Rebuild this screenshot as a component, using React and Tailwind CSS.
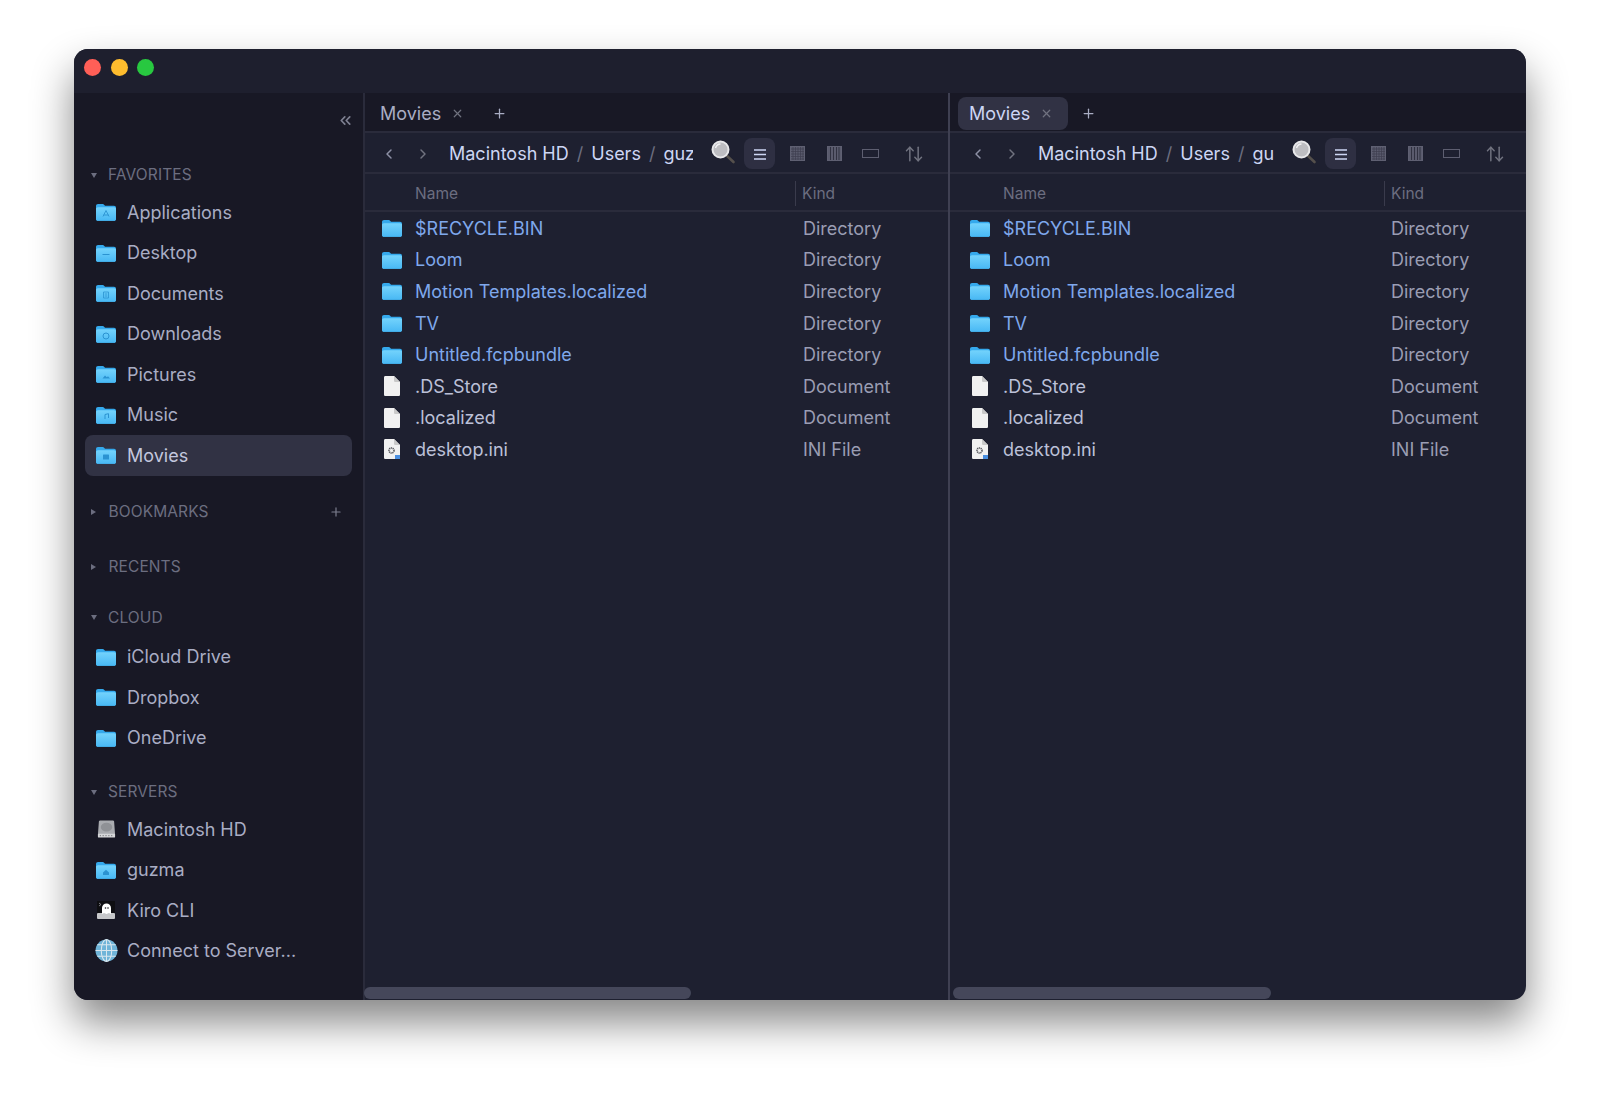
import { useId } from 'react';
import { ChevronLeft, ChevronRight, ChevronsLeft, Plus, X, ArrowUpDown } from 'lucide-react';

const FONT = 'font-[Inter,"Noto_Sans",sans-serif]';

function FolderIcon({ glyph, className = 'w-[22px] h-[18px]' }) {
  const id = useId();
  return (
    <svg viewBox="0 0 22 18" className={className}>
      <defs>
        <linearGradient id={id} x1="0" y1="0" x2="0" y2="1">
          <stop offset="0" stopColor="#74d3fc" />
          <stop offset="1" stopColor="#48b8f4" />
        </linearGradient>
      </defs>
      <path d="M1 3.2C1 1.9 1.8 1 3 1h4.6c.8 0 1.2.3 1.7.9l.8.9h8.900c1.200 0 2 .8 2 2v10.900c0 1.300-.8 2.100-2 2.100H3c-1.200 0-2-.8-2-2.100V3.200Z" fill="#35a9ec" />
      <path d="M1 6c0-1.100.8-1.800 2-1.800h16c1.200 0 2 .7 2 1.800v9.700c0 1.300-.8 2.100-2 2.100H3c-1.200 0-2-.8-2-2.100V6Z" fill={`url(#${id})`} />
      {glyph === 'apps' && <path d="M11 7.500 8 13.500M11 7.500l3 6M8.500 12h5" stroke="#2b93d1" strokeWidth="0.900" fill="none" />}
      {glyph === 'desktop' && <rect x="7.500" y="10" width="7" height="1" fill="#2b93d1" />}
      {glyph === 'docs' && <path d="M8.500 8h5v6h-5zM9.800 10h2.400M9.800 12h2.400" stroke="#2b93d1" strokeWidth="0.800" fill="none" />}
      {glyph === 'down' && <circle cx="11" cy="11" r="3" fill="none" stroke="#2b93d1" strokeWidth="1" />}
      {glyph === 'pics' && <path d="M7.500 13.500 10 10.500l1.800 1.800 1.200-1 2 2.200Z" fill="#2b93d1" />}
      {glyph === 'music' && <path d="M10 13V8.500l3.500-.8V12" stroke="#2b93d1" strokeWidth="1" fill="none" />}
      {glyph === 'movies' && <rect x="8" y="8.500" width="6" height="5" rx="0.600" fill="#2b93d1" />}
      {glyph === 'home' && <path d="M8 11.500 11 8.800l3 2.700V14H8Z" fill="#2b93d1" />}
    </svg>
  );
}

function DiskIcon() {
  return (
    <svg viewBox="0 0 22 20" className="w-[21px] h-[20px]">
      <path d="M3 2.500C3 1.600 3.600 1 4.500 1h13c.9 0 1.500.6 1.500 1.500L20 16H2Z" fill="#a9abb0" />
      <ellipse cx="11" cy="8" rx="6" ry="4.500" fill="#8f9196" />
      <rect x="2" y="15" width="18" height="4" rx="1" fill="#d5d6d9" />
      <path d="M4 17h1M7 17h1M10 17h1M13 17h1M16 17h1" stroke="#55565b" strokeWidth="1" />
    </svg>
  );
}

function KiroIcon() {
  return (
    <svg viewBox="0 0 20 20" className="w-[20px] h-[20px]">
      <rect x="1" y="1" width="18" height="13" fill="#0e0e12" />
      <rect x="1" y="13" width="18" height="6" rx="1" fill="#c6c7ca" />
      <path d="M3 3l2 1.500-2 1.500" stroke="#9a9ba0" strokeWidth="0.800" fill="none" />
      <path d="M6 14V8a4.500 4.500 0 0 1 9 0v6l-2-1-2.500 1-2.500-1Z" fill="#fff" />
      <circle cx="9.500" cy="8" r="0.800" fill="#17171c" />
      <circle cx="12" cy="8" r="0.800" fill="#17171c" />
    </svg>
  );
}

function GlobeIcon() {
  return (
    <svg viewBox="0 0 22 22" className="w-[23px] h-[23px]">
      <circle cx="11" cy="11" r="10.500" fill="#6fb4d8" />
      <g fill="none" stroke="#d8e6ee" strokeWidth="1">
        <ellipse cx="11" cy="11" rx="5" ry="10.500" />
        <path d="M11 .5v21M.5 11h21M2.200 5.500h17.600M2.200 16.500h17.600" />
      </g>
    </svg>
  );
}

function FileIcon({ ini }) {
  return (
    <svg viewBox="0 0 16 20" className="w-[16px] h-[20px]">
      <path d="M0 1.500C0 .5.600 0 1.500 0H10l6 6v12.500c0 1-.6 1.500-1.500 1.500h-13C.6 20 0 19.500 0 18.500Z" fill="#f1f1f1" />
      <path d="M10 0v4.500c0 1 .5 1.500 1.500 1.500H16Z" fill="#c9c9c9" />
      {ini && (
        <>
          <circle cx="7.500" cy="11.500" r="2.500" fill="none" stroke="#55565c" strokeWidth="1.600" strokeDasharray="1.200 0.600" />
          <rect x="11" y="16" width="5" height="4" fill="#4b8fe0" />
        </>
      )}
    </svg>
  );
}

function SearchIcon() {
  return (
    <svg viewBox="0 0 26 26" className="w-[26px] h-[26px]">
      <path d="M15.500 15.500 23.500 23" stroke="#55504c" strokeWidth="2.600" strokeLinecap="round" />
      <circle cx="10.500" cy="10.500" r="8" fill="#bdbdc1" stroke="#e8e8ea" strokeWidth="2" />
      <path d="M5.500 9a5.500 5.500 0 0 1 5-4" stroke="#f2f2f4" strokeWidth="1.500" fill="none" />
    </svg>
  );
}

function GridIcon({ kind }) {
  return (
    <svg viewBox="0 0 15 15" className="w-[15px] h-[15px]">
      <rect x="0.500" y="0.500" width="14" height="14" fill="#5a5b6d" stroke="#5f6072" />
      {kind === 'grid' && <path d="M3 1v13M5.500 1v13M8 1v13M10.500 1v13M13 1v13M1 3h13M1 5.500h13M1 8h13M1 10.500h13M1 13h13" stroke="#3d3e4f" strokeWidth="0.700" />}
      {kind === 'cols' && <path d="M3.500 1v13M6.500 1v13M9.500 1v13M12 1v13" stroke="#2b2c3b" strokeWidth="0.900" />}
    </svg>
  );
}

function SideHeading({ label, open, add, className }) {
  return (
    <div className={`flex items-center h-6 pl-[17px] pr-[20px] ${className}`}>
      {open ? (
        <span className="w-0 h-0 border-x-[3px] border-x-transparent border-t-[5px] border-t-[#6c6e80]" />
      ) : (
        <span className="w-0 h-0 border-y-[3px] border-y-transparent border-l-[5px] border-l-[#6c6e80]" />
      )}
      <span className={`${open ? 'ml-[11px]' : 'ml-[12.500px]'} text-[15.500px] text-[#6c6e80] tracking-[0.1px]`}>{label}</span>
      {add && <Plus className="ml-auto w-[14px] h-[14px] text-[#7d7f90]" strokeWidth={2} />}
    </div>
  );
}

function SideItem({ label, icon, active }) {
  return (
    <div className={`flex items-center h-[40.500px] mx-[11px] pl-[8px] rounded-lg ${active ? 'bg-[#313244]' : ''}`}>
      <span className="w-[26px] flex justify-center shrink-0">{icon}</span>
      <span className={`ml-[8px] text-[18px] ${active ? 'text-[#c3c7de]' : 'text-[#a9adc4]'}`}>{label}</span>
    </div>
  );
}

const FILES = [
  { name: '$RECYCLE.BIN', kind: 'Directory', dir: true },
  { name: 'Loom', kind: 'Directory', dir: true },
  { name: 'Motion Templates.localized', kind: 'Directory', dir: true },
  { name: 'TV', kind: 'Directory', dir: true },
  { name: 'Untitled.fcpbundle', kind: 'Directory', dir: true },
  { name: '.DS_Store', kind: 'Document' },
  { name: '.localized', kind: 'Document' },
  { name: 'desktop.ini', kind: 'INI File', ini: true },
];

function Pane({ tabActive, pathClip, backGap, searchGap, nameClass, gutterClass, barClass, className }) {
  return (
    <div className={`flex flex-col h-full min-w-0 ${className}`}>
      <div className="flex items-center h-[40px] bg-[#181825] border-b-2 border-[#2a2b3b] pl-[8px] shrink-0">
        <div className={`flex items-center h-[33px] rounded-lg pr-[15px] mt-[3px] ${tabActive ? 'pl-[11px] bg-[#313244] text-[#cdd6f4]' : 'pl-[7px] text-[#a9adc4]'}`}>
          <span className="text-[18px]">Movies</span>
          <X className="ml-[10px] w-[13px] h-[13px] text-[#70727f]" strokeWidth={2.200} />
        </div>
        <Plus className="ml-[13px] mt-[3px] w-[15px] h-[15px] text-[#a9adc4]" strokeWidth={2} />
      </div>

      <div className="flex items-center h-[41px] pt-[2px] border-b-2 border-[#2a2b3b] shrink-0">
        <ChevronLeft className={`${backGap} w-[16px] h-[16px] text-[#8d90a5]`} strokeWidth={2.200} />
        <ChevronRight className="ml-[18px] w-[16px] h-[16px] text-[#70727f]" strokeWidth={2.200} />
        <div className={`ml-[18px] flex items-center overflow-hidden whitespace-nowrap text-[18px] text-[#cdd6f4] ${pathClip}`}>
          <span>Macintosh HD</span>
          <span className="mx-[8px] text-[#6c6e80]">/</span>
          <span>Users</span>
          <span className="mx-[8px] text-[#6c6e80]">/</span>
          <span>guzma</span>
        </div>
        <span className={`${searchGap} -mt-[3px] shrink-0 flex`}><SearchIcon /></span>
        <span className="ml-[8px] flex items-center justify-center w-[31px] h-[31px] rounded-lg bg-[#2e2f42] shrink-0">
          <svg viewBox="0 0 12 11" className="w-[12px] h-[11px] mt-[2px]">
            <path d="M0 1h12M0 5.500h12M0 10h12" stroke="#cdd6f4" strokeWidth="1.500" />
          </svg>
        </span>
        <span className="ml-[15px] flex shrink-0"><GridIcon kind="grid" /></span>
        <span className="ml-[22px] flex shrink-0"><GridIcon kind="cols" /></span>
        <span className="ml-[20px] w-[17px] h-[9px] border border-[#5d5e70] shrink-0" />
        <ArrowUpDown className="ml-[25px] w-[20px] h-[20px] text-[#70727f] shrink-0" strokeWidth={1.800} />
      </div>

      <div className="flex items-center h-[38px] pt-[3px] border-b-2 border-[#2a2b3b] shrink-0 text-[15.500px] text-[#6c6e80]">
        <span className={`shrink-0 ${nameClass}`}>Name</span>
        <span className="w-px h-[25px] bg-[#3a3b4c]" />
        <span className="pl-[6px]">Kind</span>
      </div>

      <div className="flex-1 pt-[0.5px]">
        {FILES.map((f) => (
          <div key={f.name} className="flex items-center h-[31.600px] text-[18px]">
            <span className={`flex justify-center shrink-0 ${gutterClass}`}>
              {f.dir ? <FolderIcon /> : <FileIcon ini={f.ini} />}
            </span>
            <span className={`w-[388px] shrink-0 ${f.dir ? 'text-[#7fa8ec]' : 'text-[#bcc0d8]'}`}>{f.name}</span>
            <span className="text-[#9a9db3]">{f.kind}</span>
          </div>
        ))}
      </div>

      <div className={`h-[12px] rounded-full bg-[#45475a] mb-px shrink-0 ${barClass}`} />
    </div>
  );
}

export default function App() {
  return (
    <div className={`w-[1600px] h-[1100px] bg-white pl-[74px] pt-[49px] overflow-hidden ${FONT}`}>
      <div className="w-[1452px] h-[951px] rounded-[14px] overflow-hidden flex flex-col bg-[#1e2030] shadow-[0_22px_42px_rgba(0,0,0,0.48)]">
        <div className="h-[44px] flex items-start gap-[9.500px] pl-[10px] pt-[10px] bg-[#1e1f2e] shrink-0">
          <span className="w-[17px] h-[17px] rounded-full bg-[#ff5f57]" />
          <span className="w-[17px] h-[17px] rounded-full bg-[#febc2e]" />
          <span className="w-[17px] h-[17px] rounded-full bg-[#28c840]" />
        </div>

        <div className="flex flex-1 min-h-0">
          <aside className="w-[291px] shrink-0 bg-[#181825] border-r-2 border-[#2a2b3b]">
            <div className="flex justify-end pr-[9px] pt-[19px] h-[70px]">
              <ChevronsLeft className="w-[17px] h-[17px] text-[#7d7f90]" strokeWidth={2.400} />
            </div>
            <SideHeading label="FAVORITES" open />
            <div className="mt-[5px]">
              <SideItem label="Applications" icon={<FolderIcon glyph="apps" />} />
              <SideItem label="Desktop" icon={<FolderIcon glyph="desktop" />} />
              <SideItem label="Documents" icon={<FolderIcon glyph="docs" />} />
              <SideItem label="Downloads" icon={<FolderIcon glyph="down" />} />
              <SideItem label="Pictures" icon={<FolderIcon glyph="pics" />} />
              <SideItem label="Music" icon={<FolderIcon glyph="music" />} />
              <SideItem label="Movies" icon={<FolderIcon glyph="movies" />} active />
            </div>
            <SideHeading label="BOOKMARKS" add className="mt-[24px]" />
            <SideHeading label="RECENTS" className="mt-[31px]" />
            <SideHeading label="CLOUD" open className="mt-[27px]" />
            <div className="mt-[7px]">
              <SideItem label="iCloud Drive" icon={<FolderIcon />} />
              <SideItem label="Dropbox" icon={<FolderIcon />} />
              <SideItem label="OneDrive" icon={<FolderIcon />} />
            </div>
            <SideHeading label="SERVERS" open className="mt-[22px]" />
            <div className="mt-[5px]">
              <SideItem label="Macintosh HD" icon={<DiskIcon />} />
              <SideItem label="guzma" icon={<FolderIcon glyph="home" />} />
              <SideItem label="Kiro CLI" icon={<KiroIcon />} />
              <SideItem label="Connect to Server..." icon={<GlobeIcon />} />
            </div>
          </aside>

          <div className="flex flex-1 min-w-0">
            <Pane
              pathClip="w-[244px]"
              backGap="ml-[16px]"
              searchGap="ml-[17px]"
              nameClass="pl-[50px] w-[430px]"
              gutterClass="w-[50px] pl-[7px] pr-[3px]"
              barClass="w-[327px] -ml-px"
              className="w-[585px] shrink-0 border-r-2 border-[#3f4052]"
            />
            <Pane
              tabActive
              pathClip="w-[236px]"
              backGap="ml-[20px]"
              searchGap="ml-[17px]"
              nameClass="pl-[53px] w-[434px]"
              gutterClass="w-[53px] pl-[10px] pr-[3px]"
              barClass="w-[318px] ml-[3px]"
              className="flex-1"
            />
          </div>
        </div>
      </div>
    </div>
  );
}
